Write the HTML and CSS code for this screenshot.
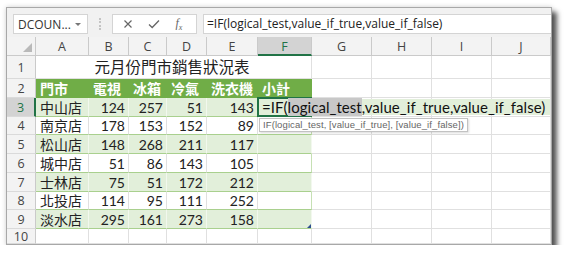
FILE: index.html
```html
<!DOCTYPE html>
<html lang="zh-Hant">
<head>
    <meta charset="UTF-8">
    <title>元月份門市銷售狀況表</title>
    <link rel="stylesheet" href="styles.css">
</head>
<body>
    <div class="window">
        <!-- formula bar -->
        <div class="toolbar">
            <div class="namebox">
                <span>DCOUN...</span>
                <span class="caret"></span>
            </div>
            <div class="grip"></div>
            <div class="fxbox">
                <svg class="icon" width="10" height="10" viewBox="0 0 10 10">
                    <path d="M1.5 1.5 L8.5 8.5 M8.5 1.5 L1.5 8.5" stroke="#666" stroke-width="1.2" fill="none"/>
                </svg>
                <svg class="icon" width="12" height="10" viewBox="0 0 12 10">
                    <path d="M1 5.5 L4.2 8.5 L11 1.5" stroke="#666" stroke-width="1.3" fill="none"/>
                </svg>
                <span class="fx">f<sub>x</sub></span>
            </div>
            <div class="formula">=IF(logical_test,value_if_true,value_if_false)</div>
        </div>

        <!-- worksheet -->
        <div class="sheet">
            <div class="row">
                <div class="corner"></div>
                <div class="ch">A</div>
                <div class="ch">B</div>
                <div class="ch">C</div>
                <div class="ch">D</div>
                <div class="ch">E</div>
                <div class="ch sel">F</div>
                <div class="ch">G</div>
                <div class="ch">H</div>
                <div class="ch">I</div>
                <div class="ch">J</div>
            </div>

            <div class="row">
                <div class="rh">1</div>
                <div class="c title">元月份門市銷售狀況表</div>
                <div class="c"></div><div class="c"></div><div class="c"></div><div class="c"></div>
            </div>

            <div class="row thead">
                <div class="rh">2</div>
                <div class="c">門市</div>
                <div class="c">電視</div>
                <div class="c">冰箱</div>
                <div class="c">冷氣</div>
                <div class="c">洗衣機</div>
                <div class="c last">小計</div>
                <div class="c"></div><div class="c"></div><div class="c"></div><div class="c"></div>
            </div>

            <div class="row band">
                <div class="rh sel">3</div>
                <div class="c">中山店</div>
                <div class="c n">124</div>
                <div class="c n">257</div>
                <div class="c n">51</div>
                <div class="c n">143</div>
                <div class="c last active">
                    <div class="edit">=IF(<span class="hl">logical_test</span>,value_if_true,value_if_false)</div>
                    <div class="tip">IF(logical_test, [value_if_true], [value_if_false])</div>
                </div>
                <div class="c"></div><div class="c"></div><div class="c"></div><div class="c"></div>
            </div>

            <div class="row plain">
                <div class="rh">4</div>
                <div class="c">南京店</div>
                <div class="c n">178</div>
                <div class="c n">153</div>
                <div class="c n">152</div>
                <div class="c n">89</div>
                <div class="c last"></div>
                <div class="c"></div><div class="c"></div><div class="c"></div><div class="c"></div>
            </div>

            <div class="row band">
                <div class="rh">5</div>
                <div class="c">松山店</div>
                <div class="c n">148</div>
                <div class="c n">268</div>
                <div class="c n">211</div>
                <div class="c n">117</div>
                <div class="c last"></div>
                <div class="c"></div><div class="c"></div><div class="c"></div><div class="c"></div>
            </div>

            <div class="row plain">
                <div class="rh">6</div>
                <div class="c">城中店</div>
                <div class="c n">51</div>
                <div class="c n">86</div>
                <div class="c n">143</div>
                <div class="c n">105</div>
                <div class="c last"></div>
                <div class="c"></div><div class="c"></div><div class="c"></div><div class="c"></div>
            </div>

            <div class="row band">
                <div class="rh">7</div>
                <div class="c">士林店</div>
                <div class="c n">75</div>
                <div class="c n">51</div>
                <div class="c n">172</div>
                <div class="c n">212</div>
                <div class="c last"></div>
                <div class="c"></div><div class="c"></div><div class="c"></div><div class="c"></div>
            </div>

            <div class="row plain">
                <div class="rh">8</div>
                <div class="c">北投店</div>
                <div class="c n">114</div>
                <div class="c n">95</div>
                <div class="c n">111</div>
                <div class="c n">252</div>
                <div class="c last"></div>
                <div class="c"></div><div class="c"></div><div class="c"></div><div class="c"></div>
            </div>

            <div class="row band">
                <div class="rh">9</div>
                <div class="c">淡水店</div>
                <div class="c n">295</div>
                <div class="c n">161</div>
                <div class="c n">273</div>
                <div class="c n">158</div>
                <div class="c last"><span class="resize"></span></div>
                <div class="c"></div><div class="c"></div><div class="c"></div><div class="c"></div>
            </div>

            <div class="row">
                <div class="rh">10</div>
                <div class="c"></div><div class="c"></div><div class="c"></div><div class="c"></div><div class="c"></div>
                <div class="c"></div><div class="c"></div><div class="c"></div><div class="c"></div><div class="c"></div>
            </div>
        </div>
    </div>
</body>
</html>
```

FILE: styles.css
```css
* {
    box-sizing: border-box;
}
body {
    margin: 0;
    background-color: white;
    font-family: Lato, "Noto Sans CJK TC", sans-serif;
}
.window {
    margin: 7px 0 0 6px;
    width: 546px;
    height: 238px;
    border: 1px solid #a8a8a8;
    background-color: #f1f1f1;
    overflow: hidden;
    box-shadow: 5px 5px 5px rgba(0,0,0,0.65), 0 0 5px rgba(0,0,0,0.18);
}

/* formula bar */
.toolbar {
    height: 29px;
    display: flex;
    align-items: flex-start;
    padding-top: 6px;
    font-family: "Open Sans", "Noto Sans", sans-serif;
}
.namebox {
    margin-left: 6px;
    width: 75px;
    height: 20px;
    background-color: white;
    border: 1px solid #d4d4d4;
    display: flex;
    align-items: center;
    justify-content: space-between;
    padding: 0 6px 0 4px;
    font-size: 12px;
    color: #333;
}
.caret {
    width: 0;
    height: 0;
    border-left: 3px solid transparent;
    border-right: 3px solid transparent;
    border-top: 3px solid #777;
}
.grip {
    margin: 4px 0 0 11px;
    height: 12px;
    border-left: 2px dotted #c4c4c4;
}
.fxbox {
    margin-left: 11px;
    width: 85px;
    height: 20px;
    background-color: white;
    border: 1px solid #d4d4d4;
    display: flex;
    align-items: center;
    justify-content: space-around;
    padding: 0 6px 0 2px;
}
.fx {
    font-family: "Liberation Serif", serif;
    font-style: italic;
    font-size: 12px;
    color: #666;
}
.fx sub {
    font-size: 8px;
}
.formula {
    margin-left: 6px;
    flex: 1;
    height: 20px;
    background-color: white;
    border: 1px solid #d4d4d4;
    border-right: none;
    padding-left: 3px;
    font-size: 12px;
    line-height: 18px;
    color: #222;
    white-space: nowrap;
}

/* worksheet grid */
.sheet {
    display: grid;
    grid-template-columns: 29px 53px 40px 38px 40px 51px 54px 60px 60px 60px 59px;
    grid-template-rows: 19px 23px 19px 19px 18px 19px 19px 19px 18px 19px 15px;
    background-color: white;
}
.row {
    display: contents;
}
.corner,
.ch,
.rh {
    background-color: #f3f3f3;
    border-right: 1px solid #cacaca;
    border-bottom: 1px solid #cacaca;
    font-family: "Open Sans", "Noto Sans", sans-serif;
    color: #444;
    display: flex;
    align-items: center;
    justify-content: center;
}
.corner {
    position: relative;
}
.corner::after {
    content: '';
    position: absolute;
    right: 3px;
    bottom: 3px;
    border-left: 9px solid transparent;
    border-bottom: 9px solid #b9b9b9;
}
.ch {
    font-size: 12.5px;
    padding-top: 1px;
}
.rh {
    font-size: 12.5px;
    border-bottom-color: #dadada;
}
.ch.sel {
    background-color: #d3d3d3;
    border-bottom: 2px solid #217346;
    color: #217346;
}
.rh.sel {
    background-color: #d3d3d3;
    border-right: 2px solid #217346;
    color: #217346;
}

.c {
    border-right: 1px solid #e0e0e0;
    border-bottom: 1px solid #e0e0e0;
    padding: 0 3px 0 4px;
    display: flex;
    align-items: flex-end;
    font-size: 14px;
    line-height: 17px;
    color: #222;
    white-space: nowrap;
}
.n {
    justify-content: flex-end;
}
.title {
    grid-column: span 6;
    justify-content: center;
    font-size: 15.5px;
    line-height: 21px;
    padding-left: 0;
}

/* table rows */
.thead .c:nth-child(-n+7) {
    background-color: #70ad47;
    border-right-color: #70ad47;
    border-bottom-color: #70ad47;
    color: white;
    font-weight: bold;
}
.band .c:nth-child(-n+7) {
    background-color: #e2efda;
    border-right-color: #f2f8ee;
    border-bottom-color: #a9d08e;
}
.plain .c:nth-child(-n+7) {
    border-bottom-color: #a9d08e;
}
.band .last,
.plain .last {
    border-right-color: #c6e0b4;
}
.last {
    position: relative;
}

/* cell in edit mode */
.active::before {
    content: '';
    position: absolute;
    left: -1px;
    top: -1px;
    right: -1px;
    bottom: -1px;
    border: 2px solid #217346;
    z-index: 1;
}
.edit {
    position: absolute;
    left: 1px;
    top: 1px;
    width: 291px;
    height: 16px;
    padding-left: 3px;
    background-color: #e2efda;
    font-size: 15px;
    line-height: 16px;
    letter-spacing: 0.05px;
    color: #111;
    z-index: 2;
}
.hl {
    background-color: #c8c8c8;
}
.tip {
    position: absolute;
    left: 1px;
    top: 20px;
    height: 14px;
    padding: 0 3px;
    border: 1px solid #c2c2c2;
    background-color: white;
    box-shadow: 1px 1px 2px rgba(0,0,0,0.15);
    font-family: "Liberation Sans", sans-serif;
    font-size: 9.5px;
    line-height: 12px;
    letter-spacing: 0.1px;
    color: #666;
    z-index: 3;
}
.resize {
    position: absolute;
    right: 0;
    bottom: 0;
    border-left: 4px solid transparent;
    border-bottom: 4px solid #2e4f8f;
}
```
